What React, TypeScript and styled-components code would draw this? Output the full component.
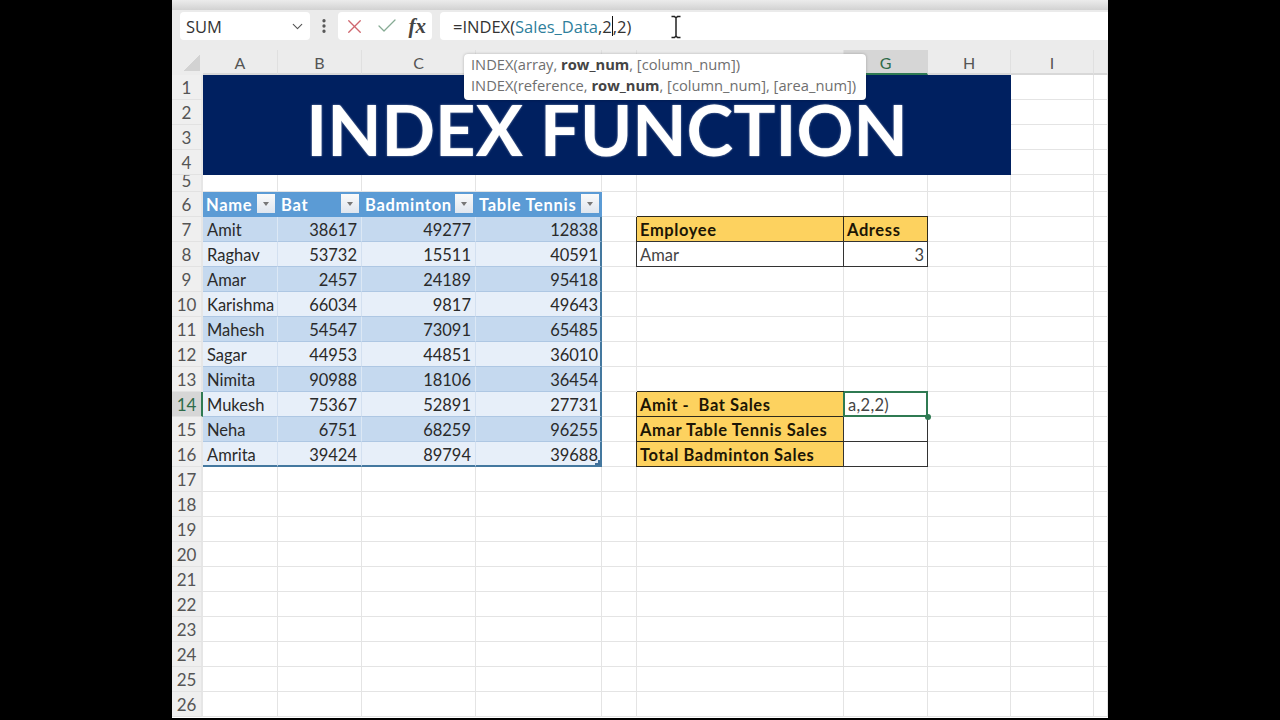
import styled, { createGlobalStyle } from 'styled-components'
import { Check, ChevronDown, EllipsisVertical, X } from 'lucide-react'

const GlobalStyle = createGlobalStyle`
  html,
  body {
    margin: 0;
    height: 100%;
    background: #000;
    overflow: hidden;
  }
`

const columnLetters = ['A', 'B', 'C', 'D', 'E', 'F', 'G', 'H', 'I', '']

type Cell = {
  text?: string
  num?: boolean
  kind?: 'head' | 'odd' | 'even' | 'gold' | 'box' | 'active'
  filter?: boolean
  edge?: boolean
  bottom?: boolean
}

const people: [string, number, number, number][] = [
  ['Amit', 38617, 49277, 12838],
  ['Raghav', 53732, 15511, 40591],
  ['Amar', 2457, 24189, 95418],
  ['Karishma', 66034, 9817, 49643],
  ['Mahesh', 54547, 73091, 65485],
  ['Sagar', 44953, 44851, 36010],
  ['Nimita', 90988, 18106, 36454],
  ['Mukesh', 75367, 52891, 27731],
  ['Neha', 6751, 68259, 96255],
  ['Amrita', 39424, 89794, 39688],
]

// what sits right of the sales table (columns E to J), by row number
const sideCells: Record<number, Cell[]> = {
  7: [{}, { text: 'Employee', kind: 'gold' }, { text: 'Adress', kind: 'gold' }, {}, {}, {}],
  8: [{}, { text: 'Amar', kind: 'box' }, { text: '3', num: true, kind: 'box' }, {}, {}, {}],
  14: [{}, { text: 'Amit -  Bat Sales', kind: 'gold' }, { text: 'a,2,2)', kind: 'active' }, {}, {}, {}],
  15: [{}, { text: 'Amar Table Tennis Sales', kind: 'gold' }, { kind: 'box' }, {}, {}, {}],
  16: [{}, { text: 'Total Badminton Sales', kind: 'gold' }, { kind: 'box' }, {}, {}, {}],
}

function rowCells(row: number): Cell[] {
  const blank = (n: number): Cell[] => Array.from({ length: n }, () => ({}))
  if (row === 6) {
    return [
      { text: 'Name', kind: 'head', filter: true },
      { text: 'Bat', kind: 'head', filter: true },
      { text: 'Badminton', kind: 'head', filter: true },
      { text: 'Table Tennis', kind: 'head', filter: true },
      ...blank(6),
    ]
  }
  if (row >= 7 && row <= 16) {
    const [name, bat, bad, tt] = people[row - 7]
    const kind = row % 2 === 1 ? 'odd' : 'even'
    const bottom = row === 16
    return [
      { text: name, kind, bottom },
      { text: String(bat), num: true, kind, bottom },
      { text: String(bad), num: true, kind, bottom },
      { text: String(tt), num: true, kind, bottom, edge: true },
      ...(sideCells[row] ?? blank(6)),
    ]
  }
  return blank(10)
}

const rows = Array.from({ length: 26 }, (_, i) => i + 1)

export default function App() {
  return (
    <>
      <GlobalStyle />
      <Page>
        <Excel>
          <TopStrip />
          <FormulaBar>
            <NameBox>
              SUM
              <ChevronDown size={17} strokeWidth={1.6} color="#555" />
            </NameBox>
            <Grip>
              <EllipsisVertical size={18} strokeWidth={2.4} color="#555" />
            </Grip>
            <FormulaButtons>
              <X size={23} strokeWidth={1.4} color="#cf666e" />
              <Check size={24} strokeWidth={1.3} color="#86ab94" />
              <Fx>fx</Fx>
            </FormulaButtons>
            <FormulaInput>
              =INDEX(<RangeRef>Sales_Data</RangeRef>,2<Caret />,2)
              <IBeam width="12" height="24" viewBox="0 0 12 24" aria-hidden="true">
                <path d="M1.5 1.5h3l1.5 1.5 1.5-1.5h3M6 3v18M1.5 22.5h3L6 21l1.5 1.5h3" fill="none" stroke="#222" strokeWidth="1.5" />
              </IBeam>
            </FormulaInput>
          </FormulaBar>
          <Sheet>
            <Corner />
            {columnLetters.map((letter, i) => (
              <ColumnHead key={i} $active={letter === 'G'}>{letter}</ColumnHead>
            ))}
            {rows.map(row => (
              <Row key={row} row={row} />
            ))}
            <Tooltip>
              <TipLine>INDEX(array, <b>row_num</b>, [column_num])</TipLine>
              <TipLine>INDEX(reference, <b>row_num</b>, [column_num], [area_num])</TipLine>
            </Tooltip>
          </Sheet>
        </Excel>
      </Page>
    </>
  )
}

function Row({ row }: { row: number }) {
  if (row >= 1 && row <= 4) {
    return (
      <>
        <RowHead>{row}</RowHead>
        {row === 1 && <Banner>INDEX FUNCTION</Banner>}
        <GridCell />
        <GridCell />
      </>
    )
  }
  return (
    <>
      <RowHead $active={row === 14} $small={row === 5}>{row}</RowHead>
      {rowCells(row).map((cell, i) => (
        <GridCell
          key={i}
          $kind={cell.kind}
          $num={cell.num}
          $edge={cell.edge}
          $bottom={cell.bottom}
        >
          {cell.text}
          {cell.filter && <FilterButton />}
          {cell.kind === 'active' && <FillHandle />}
          {cell.bottom && cell.edge && <ResizeHandle />}
        </GridCell>
      ))}
    </>
  )
}

const Page = styled.div`
  display: flex;
  justify-content: center;
  height: 720px;
  overflow: hidden;
`

const Excel = styled.div`
  width: 936px;
  height: 718px;
  background: #fff;
  overflow: hidden;
  font-family: Lato, 'Liberation Sans', sans-serif;
`

const TopStrip = styled.div`
  height: 10px;
  background: linear-gradient(#ececec, #d2d2d2);
`

const FormulaBar = styled.div`
  height: 40px;
  box-sizing: border-box;
  padding: 2px 0 10px 8px;
  background: #ebebeb;
  display: flex;
  align-items: stretch;
  font-family: 'Open Sans', 'Noto Sans', sans-serif;
  font-size: 16.5px;
  color: #333;
`

const NameBox = styled.div`
  width: 130px;
  box-sizing: border-box;
  padding: 0 4px 0 6px;
  background: #fff;
  border-radius: 4px;
  display: flex;
  align-items: center;
  justify-content: space-between;
`

const Grip = styled.div`
  width: 28px;
  display: flex;
  align-items: center;
  justify-content: center;
`

const FormulaButtons = styled.div`
  width: 94px;
  box-sizing: border-box;
  padding: 0 6px 0 5px;
  background: #fff;
  border-radius: 4px;
  display: flex;
  align-items: center;
  justify-content: space-between;
`

const Fx = styled.span`
  font-family: 'Liberation Serif', serif;
  font-style: italic;
  font-weight: 700;
  font-size: 21px;
  color: #444;
`

const FormulaInput = styled.div`
  flex: 1;
  margin-left: 8px;
  padding-left: 13px;
  background: #fff;
  border-radius: 4px 0 0 4px;
  display: flex;
  align-items: center;
  white-space: pre;
  position: relative;
`

const RangeRef = styled.span`
  color: #2f7f9c;
`

const Caret = styled.span`
  display: inline-block;
  width: 0;
  height: 20px;
  border-left: 1px solid #111;
`

const IBeam = styled.svg`
  position: absolute;
  left: 230px;
  top: 3px;
`

const Sheet = styled.div`
  position: relative;
  display: grid;
  grid-template-columns: 31px 75px 84px 114px 126px 35px 207px 84px 83px 83px 14px;
  grid-template-rows: repeat(5, 25px) 17px repeat(21, 25px);
  font-size: 16.5px;
  color: #2a2a2a;
`

const Corner = styled.div`
  background: linear-gradient(135deg, #ececec 50%, #d2d2d2 50%) right 3px bottom 4px / 16px 16px no-repeat #ececec;
`

const ColumnHead = styled.div<{ $active?: boolean }>`
  display: flex;
  align-items: center;
  justify-content: center;
  padding-top: 1px;
  font-size: 16px;
  color: ${p => (p.$active ? '#2f6b4a' : '#555')};
  background: ${p => (p.$active ? '#d6d6d6' : '#ececec')};
  border-right: 1px solid ${p => (p.$active ? '#d6d6d6' : '#e0e0e0')};
  border-bottom: 2px solid ${p => (p.$active ? '#2f7a52' : '#d8d8d8')};
  box-sizing: border-box;
`

const RowHead = styled.div<{ $active?: boolean; $small?: boolean }>`
  display: flex;
  align-items: center;
  justify-content: center;
  overflow: hidden;
  box-sizing: border-box;
  font-size: 17px;
  line-height: 17px;
  padding-bottom: ${p => (p.$small ? '6px' : '0')};
  color: ${p => (p.$active ? '#2f6b4a' : '#555')};
  background: ${p => (p.$active ? '#d6d6d6' : '#efefef')};
  border-bottom: 1px solid #e2e2e2;
  border-right: 2px solid ${p => (p.$active ? '#2f7a52' : '#e6e6e6')};
`

const kindBackground = {
  head: '#5b9bd5',
  odd: '#c5d9ef',
  even: '#e7eff9',
  gold: '#fdd25f',
  box: '#fff',
  active: '#fff',
}

const GridCell = styled.div<{
  $kind?: keyof typeof kindBackground
  $num?: boolean
  $edge?: boolean
  $bottom?: boolean
}>`
  position: relative;
  box-sizing: border-box;
  display: flex;
  align-items: center;
  justify-content: ${p => (p.$num ? 'flex-end' : 'flex-start')};
  padding: 2px 4px 0 4px;
  white-space: pre;
  background: ${p => (p.$kind ? kindBackground[p.$kind] : '#fff')};
  border-right: 1px solid #e4e4e4;
  border-bottom: 1px solid #e4e4e4;

  ${p => (p.$kind === 'head' ? 'color: #fff; font-weight: 700; letter-spacing: 0.7px; border-color: #5b9bd5; padding-left: 3px;' : '')}
  ${p => (p.$kind === 'odd' || p.$kind === 'even' ? 'border-color: #aec7e3;' : '')}
  ${p => (p.$kind === 'odd' ? 'border-right-color: #dce8f5;' : '')}
  ${p => (p.$kind === 'even' ? 'border-right-color: #d3e0f0;' : '')}
  ${p => (p.$edge ? 'border-right: 2px solid #44789f; padding-right: 2px;' : '')}
  ${p => (p.$bottom ? 'border-bottom: 2px solid #44789f;' : '')}
  ${p => (p.$kind === 'gold' ? 'font-weight: 700; letter-spacing: 0.6px; padding-left: 3px; color: #1c1605; border-color: #2e2a1c; box-shadow: -1px 0 0 #2e2a1c, 0 -1px 0 #2e2a1c;' : '')}
  ${p => (p.$kind === 'box' ? 'padding-left: 3px; padding-right: 3px; color: #444; border-color: #333; box-shadow: -1px 0 0 #333, 0 -1px 0 #333;' : '')}
  ${p => (p.$kind === 'active' ? 'z-index: 1; color: #444; letter-spacing: 0.3px; border-color: #2f7a52; box-shadow: inset 1px 1px 0 #2f7a52, inset -1px -1px 0 #2f7a52, -1px 0 0 #2f7a52, 0 -1px 0 #2f7a52;' : '')}
`

const Banner = styled.div`
  grid-column: span 8;
  grid-row: span 4;
  background: #002060;
  color: #fff;
  display: flex;
  align-items: center;
  justify-content: center;
  font-size: 70.5px;
  font-weight: 700;
  padding-top: 6px;
  box-sizing: border-box;
  text-shadow: 0 0 2px rgba(255, 255, 255, 0.6);
`

const FilterButton = styled.span`
  position: absolute;
  right: 2px;
  top: 2px;
  width: 18px;
  height: 19px;
  background: linear-gradient(#fafafa, #dfe6ef);
  &::after {
    content: '';
    position: absolute;
    left: 6px;
    top: 8px;
    border: 3px solid transparent;
    border-top: 4px solid #777;
    border-bottom: 0;
  }
`

const FillHandle = styled.span`
  position: absolute;
  right: -4px;
  bottom: -4px;
  width: 6px;
  height: 6px;
  border-radius: 50%;
  background: #2f7a52;
`

const ResizeHandle = styled.span`
  position: absolute;
  right: 0;
  bottom: 0;
  width: 5px;
  height: 5px;
  border-right: 2px solid #3f6f9a;
  border-bottom: 2px solid #3f6f9a;
  box-sizing: border-box;
`

const Tooltip = styled.div`
  position: absolute;
  z-index: 2;
  left: 292px;
  top: 4px;
  width: 402px;
  height: 46px;
  box-sizing: border-box;
  padding: 0 0 0 7px;
  background: #fff;
  border-radius: 4px;
  box-shadow: 0 0 3px rgba(0, 0, 0, 0.25);
  font-family: 'Open Sans', 'Noto Sans', sans-serif;
  font-size: 14.7px;
  color: #6f6f6f;
  b {
    color: #444;
  }
`

const TipLine = styled.div`
  height: 21px;
  line-height: 21px;
  white-space: nowrap;
`
